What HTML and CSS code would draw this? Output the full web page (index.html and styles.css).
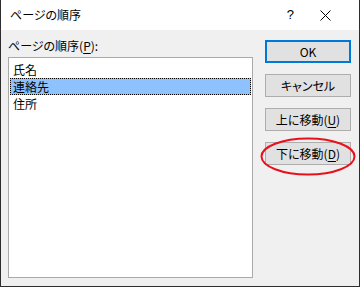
FILE: index.html
```html
<!DOCTYPE html>
<html lang="ja">
<head>
<meta charset="utf-8">
<link rel="stylesheet" href="styles.css">
</head>
<body>
<div class="window">
  <div class="titlebar">
    <span class="title">ページの順序</span>
    <span class="help">?</span>
    <svg class="close" width="11" height="11" viewBox="0 0 11 11"><path d="M0.5 0.5 L10.5 10.5 M10.5 0.5 L0.5 10.5" stroke="#000" stroke-width="1" fill="none"/></svg>
  </div>
  <div class="content">
    <div class="left">
      <div class="label">ページの順序(<u>P</u>):</div>
      <div class="listbox">
        <div class="item">氏名</div>
        <div class="item selected">連絡先</div>
        <div class="item">住所</div>
      </div>
    </div>
    <div class="buttons">
      <div class="btn default">OK</div>
      <div class="btn">キャンセル</div>
      <div class="btn">上に移動(<u>U</u>)</div>
      <div class="btn marked">下に移動(<u>D</u>)
        <svg class="ring" width="96" height="39" viewBox="0 0 96 39"><ellipse cx="48" cy="19.5" rx="46.5" ry="18" fill="none" stroke="#e8111b" stroke-width="2"/></svg>
      </div>
    </div>
  </div>
</div>
</body>
</html>
```
FILE: styles.css
```css
html, body {
  margin: 0;
  padding: 0;
}
body {
  font-family: "Noto Sans CJK JP", "Noto Sans", sans-serif;
  font-feature-settings: "palt";
  font-size: 12px;
  color: #000;
  background: #f0f0f0;
}
.window {
  width: 360px;
  height: 287px;
  box-sizing: border-box;
  border: 1px solid #2e2e2e;
  border-top: none;
  background: #f0f0f0;
  display: flex;
  flex-direction: column;
}
.titlebar {
  height: 30px;
  background: #fff;
  display: flex;
  align-items: center;
  padding-left: 9px;
  padding-right: 28px;
  flex-shrink: 0;
}
.title {
  flex: 1;
  font-size: 12px;
  line-height: 16px;
}
.help {
  font-size: 13px;
  font-family: "Liberation Sans", sans-serif;
  margin-right: 26px;
  line-height: 16px;
}
.close {
  display: block;
}
.content {
  flex: 1;
  display: flex;
  padding: 8px 8px 0 7px;
  gap: 12px;
}
.left {
  display: flex;
  flex-direction: column;
}
.label {
  line-height: 15px;
  height: 15px;
  margin-bottom: 4px;
}
.label u, .btn u {
  text-decoration-thickness: 1px;
  text-underline-offset: 2px;
}
.listbox {
  width: 245px;
  height: 221px;
  box-sizing: border-box;
  border: 1px solid #a9a9a9;
  background: #fff;
  padding: 3px 1px;
}
.item {
  height: 17px;
  line-height: 17px;
  padding-left: 3px;
  box-sizing: border-box;
}
.item.selected {
  background: #8ec2ff;
  outline: 1px dotted #000;
  outline-offset: -1px;
}
.buttons {
  display: flex;
  flex-direction: column;
  gap: 11px;
  padding-top: 2px;
}
.btn {
  position: relative;
  width: 86px;
  height: 23px;
  box-sizing: border-box;
  border: 1px solid #adadad;
  background: #e1e1e1;
  display: flex;
  align-items: center;
  justify-content: center;
  line-height: 15px;
}
.btn.default {
  border: 2px solid #0078d7;
}
.ring {
  position: absolute;
  left: -6px;
  top: -6px;
  pointer-events: none;
}
```
